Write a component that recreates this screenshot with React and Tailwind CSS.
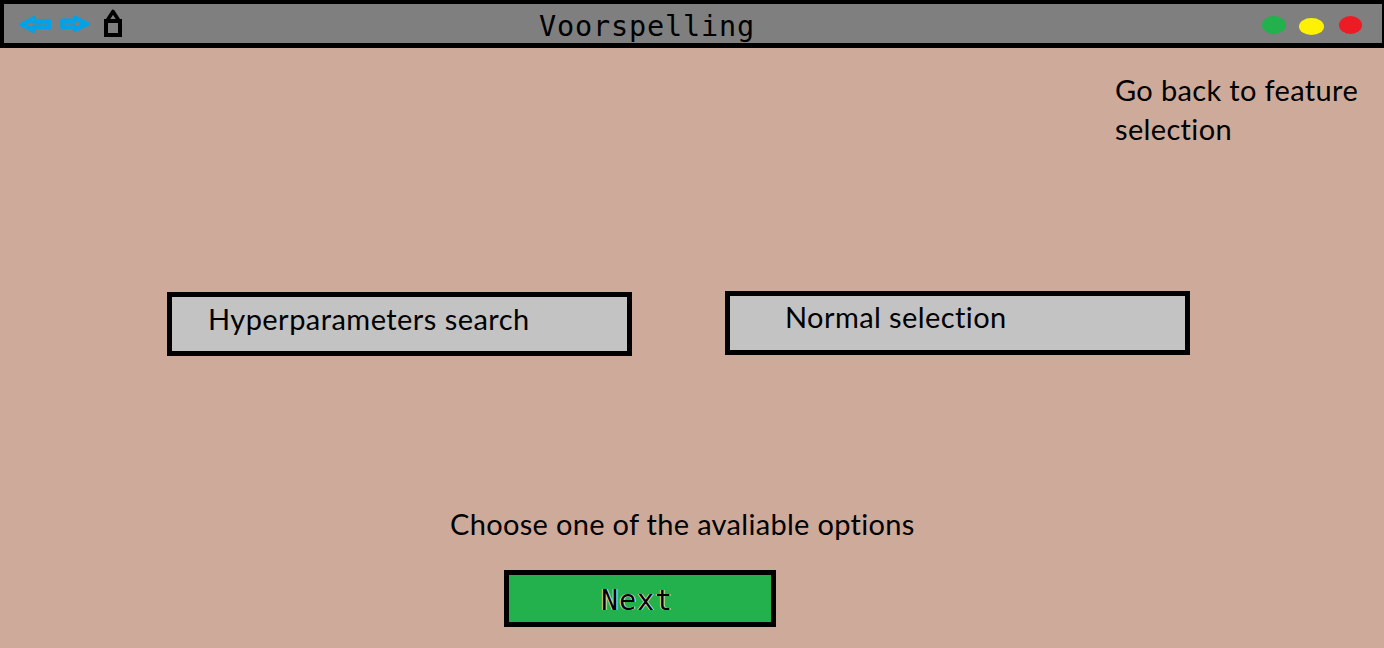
function ArrowLeft() {
  return (
    <svg className="mt-3 h-[18px] w-8" viewBox="0 0 32 18" fill="none" stroke="#00a2e8" strokeWidth="4" strokeLinejoin="round">
      <path d="M2.5 8.5L15 2V5.3H30.5V10.9H15V15Z" />
      <path d="M14.5 3.5V7.2H28M14.5 13.5V9.8H28M5 8.5L12 5.5M5 8.5L12 11.5" strokeWidth="2" />
    </svg>
  );
}

function ArrowRight() {
  return (
    <svg className="mt-[11px] ml-[9px] h-[18px] w-[30px]" viewBox="0 0 30 18" fill="none" stroke="#00a2e8" strokeWidth="4" strokeLinejoin="round">
      <path d="M2.2 5.6H15V2.5L27.5 9L15 15V12H2.2Z" />
      <path d="M2 7.5H15.5M2 10.5H15.5M16 4.5L25 9L16 13.5M20 7V11M3 6V12" strokeWidth="2" />
    </svg>
  );
}

function Home() {
  return (
    <svg className="mt-[5px] ml-[14px] h-7 w-[18px]" viewBox="0 0 18 28" fill="none" stroke="#000" strokeWidth="4">
      <path d="M2 12H16V26H2Z" />
      <path d="M3.5 11L9 2.5L14.5 11" strokeWidth="3.6" strokeLinejoin="round" />
    </svg>
  );
}

export default function App() {
  return (
    <div className="flex h-[648px] w-[1384px] flex-col overflow-hidden bg-[#ceaa9a] font-['Lato',sans-serif] text-[29px] leading-[39px] text-black">
      <header className="flex h-12 items-start border-t-4 border-r-2 border-b-[5px] border-l-4 border-black bg-[#7f7f7f]">
        <nav className="flex w-[535px] pl-[15px]">
          <ArrowLeft />
          <ArrowRight />
          <Home />
        </nav>
        <h1 className="mt-[3px] font-['DejaVu_Sans_Mono',monospace] text-[28.5px] leading-[39px] tracking-[0.85px] whitespace-nowrap">Voorspelling</h1>
        <div className="ml-auto flex pr-5">
          <span className="mt-3 h-[18px] w-6 rounded-[50%] bg-[#22b14c]" />
          <span className="mt-[14px] ml-[13px] h-[17px] w-[25px] rounded-[50%] bg-[#fff200]" />
          <span className="mt-3 ml-[15px] h-[18px] w-[23px] rounded-[50%] bg-[#ed1c24]" />
        </div>
      </header>
      <main className="flex flex-col">
        <a className="mt-[22px] ml-[1115px] w-[250px] tracking-[0.35px]">
          Go back to feature
          <br />
          selection
        </a>
        <div className="mt-[143px] ml-[167px] flex gap-[93px]">
          <button className="mt-px flex h-16 w-[465px] border-[5px] border-black bg-[#c3c3c3] pt-[2px] pl-9 whitespace-nowrap tracking-[0.45px]">Hyperparameters search</button>
          <button className="flex h-16 w-[465px] border-[5px] border-black bg-[#c3c3c3] pt-px pl-[55px] whitespace-nowrap tracking-[0.41px]">Normal selection</button>
        </div>
        <p className="mt-[148px] ml-[450px] whitespace-nowrap tracking-[0.31px]">Choose one of the avaliable options</p>
        <button className="mt-[27px] ml-[504px] flex h-[57px] w-[272px] border-[5px] border-black bg-[#22b14c] pt-[6px] pl-[92px] font-['DejaVu_Sans_Mono',monospace] text-[28.5px] leading-[39px] tracking-[0.85px] [text-shadow:-1px_0_#f5dfa0,1px_0_#bfe5ef]">Next</button>
      </main>
    </div>
  );
}
